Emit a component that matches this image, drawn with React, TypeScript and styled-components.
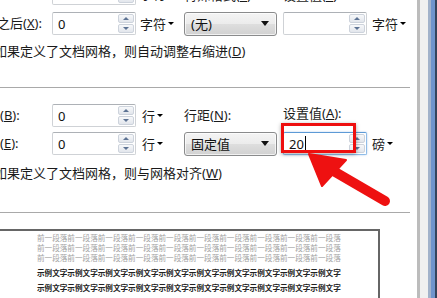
import React from 'react';
import styled, { createGlobalStyle } from 'styled-components';

const GlobalStyle = createGlobalStyle`
  html, body {
    margin: 0;
    padding: 0;
    background: #fff;
    overflow: hidden;
  }
  body {
    font-family: "Noto Sans", "Noto Sans CJK SC", sans-serif;
    color: #1a1a1a;
  }
`;

const SpinBox = ({ value, focused, marked }: { value: string; focused?: boolean; marked?: boolean }) => (
  <SpinField $focused={focused}>
    <SpinValue>
      {value}
      {focused && <Caret />}
    </SpinValue>
    <Spinner>
      <SpinButton>
        <SpinArrow $up />
      </SpinButton>
      <SpinButton>
        <SpinArrow />
      </SpinButton>
    </Spinner>
    {marked && <Highlight />}
  </SpinField>
);

const Combo = ({ value }: { value: string }) => (
  <ComboBox>
    <span>{value}</span>
    <ComboArrow />
  </ComboBox>
);

const UnitMenu = ({ text, pad = 4 }: { text: string; pad?: number }) => (
  <Unit $pad={pad}>
    {text}
    <UnitCaret />
  </Unit>
);

const App = () => {
  return (
    <Frame>
      <GlobalStyle />
      <Panel>
        <Content>
          {/* --- indentation --- */}
          <FieldGrid $gap={7}>
            <Label $shift={-3}>文本之前(<u>R</u>):</Label>
            <SpinBox value="0" />
            <UnitMenu text="字符" />
            <Label $lift={-2}>特殊格式(<u>S</u>):</Label>
            <Label $lift={-2}>设置值(<u>Y</u>):</Label>
            <span />

            <Label $shift={-3}>文本之后(<u>X</u>):</Label>
            <SpinBox value="0" />
            <UnitMenu text="字符" />
            <Combo value="(无)" />
            <SpinBox value="" />
            <UnitMenu text="字符" />
          </FieldGrid>
          <CheckLine $top={8}>
            如果定义了文档网格，则自动调整右缩进(<u>D</u>)
          </CheckLine>

          <Separator $top={27} />

          {/* --- spacing --- */}
          <FieldGrid $gap={5} $top={16}>
            <Label>段前(<u>B</u>):</Label>
            <SpinBox value="0" />
            <UnitMenu text="行" pad={6} />
            <Label>行距(<u>N</u>):</Label>
            <Label $lift={2}>设置值(<u>A</u>):</Label>
            <span />

            <Label>段后(<u>E</u>):</Label>
            <SpinBox value="0" />
            <UnitMenu text="行" pad={6} />
            <Combo value="固定值" />
            <SpinBox value="20" focused marked />
            <UnitMenu text="磅" />
          </FieldGrid>
          <CheckLine $top={10}>
            如果定义了文档网格，则与网格对齐(<u>W</u>)
          </CheckLine>

          <Separator $top={30} />

          {/* --- preview --- */}
          <Preview>
            <PreviewLine>{'前一段落'.repeat(10)}</PreviewLine>
            <PreviewLine>{'前一段落'.repeat(10)}</PreviewLine>
            <PreviewLine>{'前一段落'.repeat(10)}</PreviewLine>
            <SampleLine $top={2}>{'示例文字'.repeat(10)}</SampleLine>
            <SampleLine>{'示例文字'.repeat(10)}</SampleLine>
          </Preview>
        </Content>
      </Panel>
      <SideFrame />

      <ArrowLayer viewBox="0 0 437 298" width="437" height="298">
        <line x1="330" y1="169" x2="385" y2="201" stroke="#ee1111" strokeWidth="10" strokeLinecap="round" />
        <polygon points="309,154 322,186 346,160" fill="#ee1111" stroke="#ee1111" strokeWidth="2" strokeLinejoin="round" />
      </ArrowLayer>
    </Frame>
  );
};

// --- Styled Components ---
const Frame = styled.div`
  position: relative;
  display: flex;
  width: 437px;
  height: 298px;
  overflow: hidden;
`;

const Panel = styled.div`
  flex: 0 0 417px;
  height: 100%;
  background: #fff;
  overflow: hidden;
`;

const SideFrame = styled.div`
  flex: 0 0 20px;
  height: 100%;
  background: linear-gradient(
    to right,
    #bcbcbc 0 3px,
    #f0f0f0 3px 11px,
    #a2b2ca 11px 14px,
    #6f94cc 14px 18px,
    #34445c 18px 20px
  );
`;

const Content = styled.div`
  display: flex;
  flex-direction: column;
  margin: -18px 0 0 -26px;
  width: 443px;
`;

const FieldGrid = styled.div<{ $gap: number; $top?: number }>`
  display: grid;
  grid-template-columns: 78px 84px 48px 99px 85px 40px;
  grid-auto-rows: 23px;
  row-gap: ${(p) => p.$gap}px;
  align-items: center;
  margin-top: ${(p) => p.$top || 0}px;
`;

const Label = styled.span<{ $shift?: number; $lift?: number }>`
  font-size: 13px;
  line-height: 17px;
  white-space: nowrap;
  margin-left: ${(p) => p.$shift || 0}px;
  position: relative;
  top: ${(p) => -(p.$lift || 0)}px;
`;

const SpinField = styled.div<{ $focused?: boolean }>`
  position: relative;
  display: flex;
  box-sizing: border-box;
  width: 84px;
  height: 23px;
  padding: 1px;
  background: #fff;
  border: 1px solid ${(p) => (p.$focused ? '#8fbce8' : '#cfd2d6')};
  border-top-color: ${(p) => (p.$focused ? '#5d9ad6' : '#adb1b6')};
  border-radius: 2px;
  box-shadow: ${(p) => (p.$focused ? '0 0 2px rgba(90, 150, 220, 0.5)' : 'none')};
`;

const SpinValue = styled.div`
  flex: 1;
  display: flex;
  align-items: center;
  padding-left: 4px;
  font-size: 13px;
  color: #111;
`;

const Caret = styled.span`
  display: inline-block;
  width: 1px;
  height: 15px;
  margin-left: 1px;
  background: #000;
`;

const Spinner = styled.div`
  display: flex;
  flex-direction: column;
  gap: 1px;
  width: 16px;
`;

const SpinButton = styled.div`
  flex: 1;
  display: flex;
  align-items: center;
  justify-content: center;
  border: 1px solid #cdd3dc;
  border-radius: 2px;
  background: linear-gradient(#f7f8fa, #e2e6ec);
`;

const SpinArrow = styled.span<{ $up?: boolean }>`
  width: 0;
  height: 0;
  border-left: 3px solid transparent;
  border-right: 3px solid transparent;
  ${(p) => (p.$up ? 'border-bottom: 3px solid #5d7394;' : 'border-top: 3px solid #5d7394;')}
`;

const Highlight = styled.span`
  position: absolute;
  left: -3px;
  top: -10px;
  width: 75px;
  height: 30px;
  box-sizing: border-box;
  border: 3px solid #ee0f0f;
  box-shadow: 0 1px 4px rgba(0, 0, 0, 0.35);
  pointer-events: none;
`;

const ComboBox = styled.div`
  display: flex;
  align-items: center;
  justify-content: space-between;
  box-sizing: border-box;
  width: 93px;
  height: 24px;
  padding: 0 7px 0 6px;
  font-size: 13px;
  color: #111;
  border: 1px solid #8a8b8c;
  border-radius: 3px;
  background: linear-gradient(#f4f4f4 0%, #ececec 48%, #dedede 52%, #d1d1d1 100%);
  box-shadow: inset 0 0 0 1px rgba(255, 255, 255, 0.7);
`;

const ComboArrow = styled.span`
  width: 0;
  height: 0;
  border-left: 4px solid transparent;
  border-right: 4px solid transparent;
  border-top: 5px solid #111;
`;

const Unit = styled.span<{ $pad: number }>`
  display: flex;
  align-items: center;
  padding-left: ${(p) => p.$pad}px;
  font-size: 13px;
  white-space: nowrap;
`;

const UnitCaret = styled.span`
  width: 0;
  height: 0;
  margin-left: 2px;
  border-left: 3px solid transparent;
  border-right: 3px solid transparent;
  border-top: 3px solid #000;
`;

const CheckLine = styled.div<{ $top: number }>`
  margin: ${(p) => p.$top}px 0 0 20px;
  font-size: 13px;
  line-height: 17px;
  white-space: nowrap;
`;

const Separator = styled.div<{ $top: number }>`
  width: 436px;
  height: 1px;
  margin-top: ${(p) => p.$top}px;
  background: #a9a9a9;
`;

const Preview = styled.div`
  box-sizing: border-box;
  width: 406px;
  height: 90px;
  margin-top: 16px;
  padding: 2px 0 0 61px;
  border: 2px solid #666;
  border-bottom: none;
  background: #fff;
`;

const PreviewLine = styled.div`
  font-family: "Noto Sans CJK SC", sans-serif;
  font-size: 7.6px;
  line-height: 10px;
  color: #a3a3a3;
  white-space: nowrap;
`;

const SampleLine = styled.div<{ $top?: number }>`
  font-family: "Noto Sans CJK SC", sans-serif;
  font-size: 7.6px;
  font-weight: 700;
  line-height: 15px;
  margin-top: ${(p) => p.$top || 0}px;
  color: #222;
  white-space: nowrap;
`;

const ArrowLayer = styled.svg`
  position: absolute;
  left: 0;
  top: 0;
  pointer-events: none;
`;

export default App;
